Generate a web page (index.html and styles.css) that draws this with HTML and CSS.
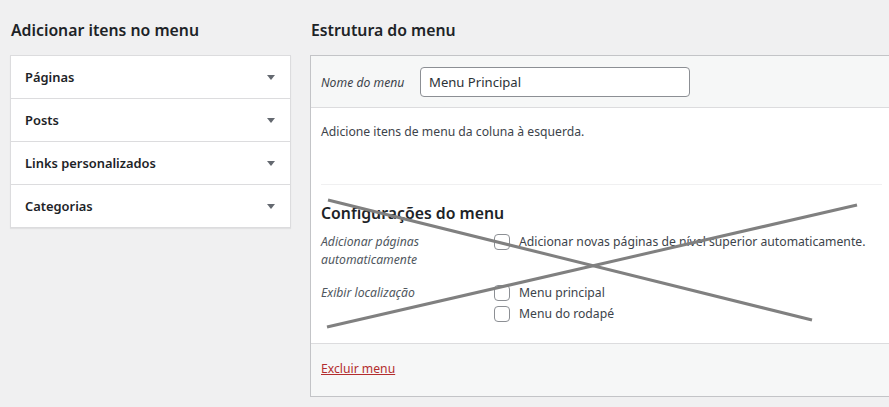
FILE: index.html
```html
<!DOCTYPE html>
<html lang="pt-BR">
<head>
<meta charset="utf-8">
<title>Menus</title>
<link rel="stylesheet" href="styles.css">
</head>
<body>
<div class="page">
  <div class="col-left">
    <h2 class="col-title">Adicionar itens no menu</h2>
    <div class="accordion">
      <div class="acc-item"><span>Páginas</span><i class="caret"></i></div>
      <div class="acc-item"><span>Posts</span><i class="caret"></i></div>
      <div class="acc-item"><span>Links personalizados</span><i class="caret"></i></div>
      <div class="acc-item"><span>Categorias</span><i class="caret"></i></div>
    </div>
  </div>
  <div class="col-right">
    <h2 class="col-title">Estrutura do menu</h2>
    <div class="menu-box">
      <div class="menu-header">
        <label class="name-label">Nome do menu</label>
        <div class="name-input">Menu Principal</div>
      </div>
      <div class="menu-body">
        <p class="instructions">Adicione itens de menu da coluna à esquerda.</p>
        <div class="settings">
          <h3 class="settings-title">Configurações do menu</h3>
          <div class="setting-row">
            <div class="setting-label">Adicionar páginas<br>automaticamente</div>
            <div class="setting-opts">
              <div class="opt"><span class="check"></span>Adicionar novas páginas de nível superior automaticamente.</div>
            </div>
          </div>
          <div class="setting-row">
            <div class="setting-label">Exibir localização</div>
            <div class="setting-opts">
              <div class="opt"><span class="check"></span>Menu principal</div>
              <div class="opt"><span class="check"></span>Menu do rodapé</div>
            </div>
          </div>
        </div>
      </div>
      <div class="menu-footer">
        <a class="delete-link" href="#">Excluir menu</a>
      </div>
    </div>
  </div>
</div>
<svg class="cross" width="889" height="407" viewBox="0 0 889 407">
  <line x1="328" y1="200" x2="812" y2="320" stroke="#808080" stroke-width="3"/>
  <line x1="327" y1="327" x2="857" y2="205" stroke="#808080" stroke-width="3"/>
</svg>
</body>
</html>
```
FILE: styles.css
```css
html, body {
  margin: 0;
  padding: 0;
  overflow: hidden;
}
body {
  background: #f0f0f1;
  font-family: "Noto Sans", "Open Sans", sans-serif;
  font-size: 12.2px;
  color: #3c434a;
  width: 889px;
  height: 407px;
  position: relative;
}
.page {
  display: flex;
  padding-left: 10px;
  gap: 19px;
}
.col-left {
  width: 281px;
  flex: none;
}
.col-right {
  flex: 1;
  min-width: 0;
  margin-right: -4px;
}
.col-title {
  margin: 0;
  padding: 18px 0 13px 1px;
  font-size: 15.8px;
  font-weight: 600;
  line-height: 24px;
  color: #1d2327;
}
.accordion {
  background: #fff;
  border: 1px solid #dcdcde;
  box-shadow: 0 1px 1px rgba(0,0,0,0.06);
}
.acc-item {
  height: 42px;
  display: flex;
  align-items: center;
  justify-content: space-between;
  padding: 0 15px 0 14px;
  border-top: 1px solid #dcdcde;
  font-size: 12.9px;
  font-weight: 600;
  color: #1d2327;
}
.acc-item:first-child {
  border-top: 0;
}
.caret {
  width: 0;
  height: 0;
  border-left: 4px solid transparent;
  border-right: 4px solid transparent;
  border-top: 5px solid #646970;
}
.menu-box {
  border: 1px solid #c3c4c7;
  background: #fff;
}
.menu-header {
  background: #f6f7f7;
  border-bottom: 1px solid #dcdcde;
  padding: 11px 10px 10px;
  display: flex;
  align-items: center;
}
.name-label {
  font-style: italic;
  color: #3c434a;
  width: 99px;
}
.name-input {
  width: 252px;
  height: 28px;
  line-height: 28px;
  border: 1px solid #8c8f94;
  border-radius: 4px;
  background: #fff;
  padding: 0 8px;
  font-size: 13.1px;
  color: #2c3338;
}
.menu-body {
  padding: 0 10px;
}
.instructions {
  margin: 0;
  padding: 15px 0 0;
  line-height: 18px;
  height: 61px;
}
.settings {
  border-top: 1px solid #f0f0f1;
  padding: 17px 0 20px;
}
.settings-title {
  margin: 0 0 9px;
  font-size: 15.8px;
  font-weight: 600;
  line-height: 22px;
  color: #1d2327;
}
.setting-row {
  display: flex;
  margin-bottom: 15px;
}
.setting-row:last-child {
  margin-bottom: 0;
}
.setting-label {
  width: 173px;
  flex: none;
  font-style: italic;
  color: #50575e;
  line-height: 18px;
}
.setting-opts {
  flex: 1;
  display: flex;
  flex-direction: column;
  gap: 3px;
}
.opt {
  display: flex;
  align-items: center;
  gap: 9px;
  line-height: 18px;
  color: #3c434a;
}
.check {
  width: 14px;
  height: 14px;
  border: 1px solid #8c8f94;
  border-radius: 4px;
  background: #fff;
  flex: none;
}
.menu-footer {
  background: #f6f7f7;
  border-top: 1px solid #dcdcde;
  padding: 14px 10px 17px;
  height: 21px;
  line-height: 21px;
}
.delete-link {
  color: #b32d2e;
  text-decoration: underline;
}
.cross {
  position: absolute;
  left: 0;
  top: 0;
  pointer-events: none;
}
```
